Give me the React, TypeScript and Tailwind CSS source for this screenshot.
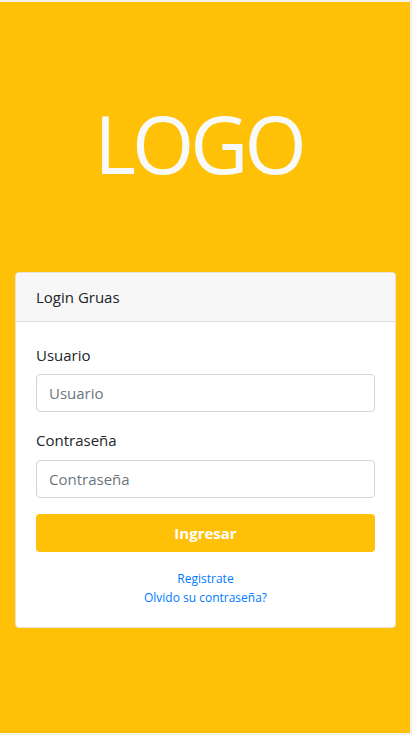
import React from "react";

export default function App() {
  const font = { fontFamily: '"Open Sans", "Noto Sans", sans-serif' };
  return (
    <div className="w-[412px] h-[735px] bg-[#f3f1ec] pt-[2px] pr-[2px] pb-[2px]" style={font}>
      <div className="h-full bg-[#ffc107] flex flex-col">
        <div className="h-[270px] flex items-start justify-center pr-[13px] pt-[101px]">
          <span className="text-[80px] leading-none font-normal text-[#f8f9fa] tracking-[-4px]">LOGO</span>
        </div>
        <div className="ml-[15px] w-[381px] bg-white rounded-[4px] border border-[#e6e2d6] overflow-hidden">
          <div className="h-[49px] bg-[#f7f7f7] border-b border-[#dcdcdc] flex items-center px-[20px] text-[15px] text-[#212529]">
            Login Gruas
          </div>
          <div className="px-[20px] pt-[21px] pb-[20px] flex flex-col">
            <label className="text-[15px] leading-[24px] text-[#212529]">Usuario</label>
            <input
              placeholder="Usuario"
              className="mt-[7px] h-[38px] w-full rounded-[4px] border border-[#ced4da] px-[12px] text-[15px] text-[#495057] placeholder:text-[#6c757d] outline-none"
            />
            <label className="mt-[16px] text-[15px] leading-[24px] text-[#212529]">Contraseña</label>
            <input
              placeholder="Contraseña"
              className="mt-[8px] h-[38px] w-full rounded-[4px] border border-[#ced4da] px-[12px] text-[15px] text-[#495057] placeholder:text-[#6c757d] outline-none"
            />
            <button className="mt-[16px] h-[38px] w-full rounded-[4px] bg-[#ffc107] text-white font-bold text-[15px]">
              Ingresar
            </button>
            <div className="mt-[17px] flex flex-col items-center text-[12px] leading-[19px] text-[#007bff]">
              <a>Registrate</a>
              <a>Olvido su contraseña?</a>
            </div>
          </div>
        </div>
      </div>
    </div>
  );
}
